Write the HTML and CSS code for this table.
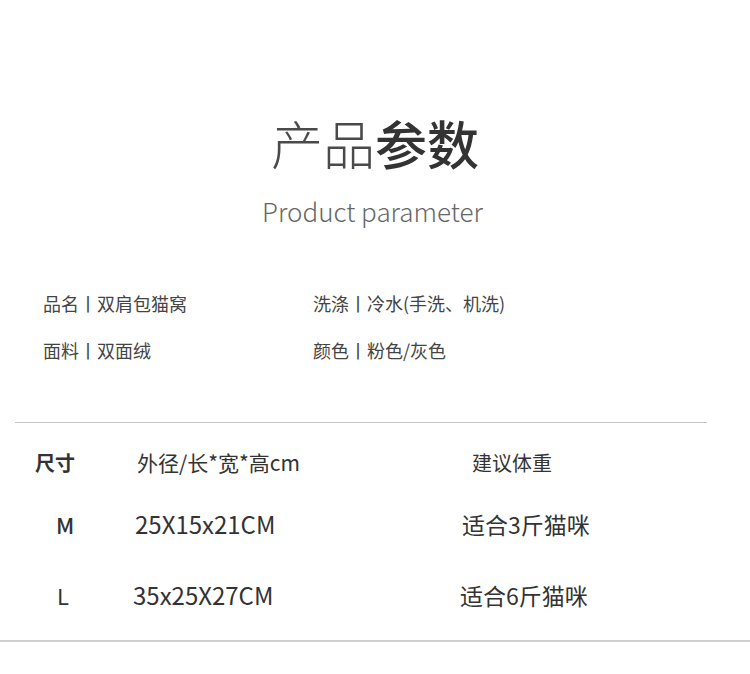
FILE: index.html
```html
<!DOCTYPE html>
<html lang="zh">
<head>
<meta charset="utf-8">
<title>产品参数</title>
<link rel="stylesheet" href="styles.css">
</head>
<body>
<div class="page">
  <header class="heading">
    <h1 class="title"><span class="thin">产品</span><span class="bold">参数</span></h1>
    <p class="subtitle">Product parameter</p>
  </header>
  <section class="info">
    <div class="info-item">品名丨双肩包猫窝</div>
    <div class="info-item">洗涤丨冷水(手洗、机洗)</div>
    <div class="info-item">面料丨双面绒</div>
    <div class="info-item">颜色丨粉色/灰色</div>
  </section>
  <hr class="rule-top">
  <section class="sizes">
    <div class="row row-head">
      <div class="c1 head-size">尺寸</div>
      <div class="c2 head-dim">外径/长*宽*高cm</div>
      <div class="c3 head-wt">建议体重</div>
    </div>
    <div class="row row-m">
      <div class="c1 size-m">M</div>
      <div class="c2 dim-m">25X15x21CM</div>
      <div class="c3 wt-m">适合3斤猫咪</div>
    </div>
    <div class="row row-l">
      <div class="c1 size-l">L</div>
      <div class="c2 dim-l">35x25X27CM</div>
      <div class="c3 wt-l">适合6斤猫咪</div>
    </div>
  </section>
  <hr class="rule-bottom">
</div>
</body>
</html>
```

FILE: styles.css
```css
html, body {
  margin: 0;
  padding: 0;
  background: #ffffff;
}
body {
  font-family: "Noto Sans CJK SC", "Noto Sans", sans-serif;
  color: #3a3a3a;
}
.page {
  width: 750px;
  height: 674px;
  overflow: hidden;
  display: flex;
  flex-direction: column;
}
.heading {
  padding-top: 110px;
  display: flex;
  flex-direction: column;
  align-items: center;
}
.title {
  margin: 0;
  font-size: 52px;
  line-height: 66px;
  font-weight: 400;
  letter-spacing: 0;
  display: flex;
}
.thin {
  font-weight: 300;
  color: #4a4a4a;
}
.bold {
  font-weight: 500;
  color: #333333;
}
.subtitle {
  margin: 17px 5px 0 0;
  font-size: 26px;
  line-height: 36px;
  font-weight: 300;
  color: #666666;
}
.info {
  margin-top: 61px;
  padding-left: 43px;
  display: grid;
  grid-template-columns: 270px 1fr;
  row-gap: 21px;
  font-size: 18px;
  line-height: 26px;
  color: #444444;
}
.rule-top {
  margin: 59px 0 0 15px;
  width: 692px;
  border: 0;
  height: 1px;
  background: #c4c4c4;
}
.sizes {
  padding-left: 35px;
  display: flex;
  flex-direction: column;
}
.row {
  display: grid;
  grid-template-columns: 100px 325px 1fr;
  align-items: center;
  color: #333333;
}
.row-head {
  margin-top: 22px;
  height: 34px;
  font-size: 20px;
}
.row-m {
  margin-top: 27px;
  height: 34px;
  font-size: 23px;
}
.row-l {
  margin-top: 38px;
  height: 34px;
  font-size: 23px;
}
.head-size { font-weight: 700; }
.head-dim { padding-left: 2px; font-size: 21px; }
.head-wt { padding-left: 12px; }
.size-m { padding-left: 21px; font-weight: 500; font-size: 22px; }
.dim-m, .dim-l { font-size: 24px; }
.wt-m { padding-left: 2px; }
.size-l { padding-left: 22px; font-size: 22px; }
.dim-l { margin-left: -2px; margin-top: -2px; }
.rule-bottom {
  margin: 28px 0 0 0;
  width: 750px;
  border: 0;
  height: 2px;
  background: #d0d0d0;
}
```
